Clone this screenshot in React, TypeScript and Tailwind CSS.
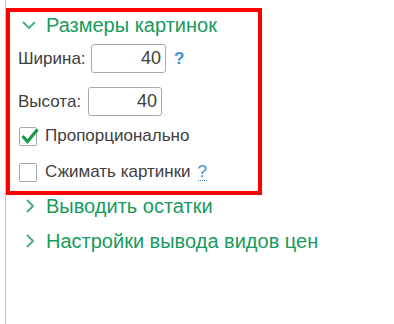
import React from "react";

/* ---------- иконки ---------- */
const ChevronDown = () => (
  <svg width="14" height="8" viewBox="0 0 14 8" className="shrink-0">
    <path d="M1 1 L7 7 L13 1" fill="none" stroke="#4caf80" strokeWidth="2" />
  </svg>
);

const ChevronRight = () => (
  <svg width="8" height="14" viewBox="0 0 8 14" className="shrink-0">
    <path d="M1 1 L7 7 L1 13" fill="none" stroke="#4caf80" strokeWidth="2" />
  </svg>
);

const Check = () => (
  <svg width="20" height="18" viewBox="0 0 20 18" className="absolute left-[0px] top-[-1px]">
    <path d="M2.5 9 L7.5 14.5 L17.5 2.5" fill="none" stroke="#179b4a" strokeWidth="3.2" />
  </svg>
);

/* ---------- элементы ---------- */
const NumField = ({ value, w }: { value: string; w: string }) => (
  <div
    className={`${w} h-[29px] border border-[#a8a8a8] rounded-[3px] flex items-center justify-end pr-[4px] text-[18px] text-[#404040]`}
  >
    {value}
  </div>
);

const CheckBox = ({ checked }: { checked?: boolean }) => (
  <div className="relative w-[18px] h-[19px] border border-[#a8a8a8] rounded-[2px] bg-white shrink-0">
    {checked && <Check />}
  </div>
);

const Group = ({ title }: { title: string }) => (
  <div className="flex items-center h-[24px] pl-[20px] gap-[12px] text-[20px] text-[#169b5c]">
    <ChevronRight />
    <span>{title}</span>
  </div>
);

export default function App() {
  return (
    <div
      className="w-[394px] h-[324px] bg-white pl-[5px] overflow-hidden"
      style={{ fontFamily: '"Liberation Sans", Arial, sans-serif' }}
    >
      <div className="h-full border-l border-[#c4c4c4] pt-[8px]">
        {/* выделенный блок */}
        <div className="w-[256px] h-[187px] border-[4px] border-[#ff0000] pt-[1px]">
          <div className="flex items-center h-[24px] pl-[12px] gap-[10px] text-[20px] text-[#169b5c]">
            <ChevronDown />
            <span>Размеры картинок</span>
          </div>

          <div className="flex items-center mt-[7px] pl-[8px] text-[17px] text-[#404040]">
            <span className="w-[73px]">Ширина:</span>
            <NumField value="40" w="w-[75px]" />
            <span className="ml-[8px] text-[17px] font-bold text-[#3a8ed8]">?</span>
          </div>

          <div className="flex items-center mt-[14px] pl-[8px] text-[17px] text-[#404040]">
            <span className="w-[70px]">Высота:</span>
            <NumField value="40" w="w-[74px]" />
          </div>

          <div className="flex items-center h-[20px] mt-[10px] pl-[9px] gap-[8px] text-[17px] text-[#404040] leading-[20px]">
            <CheckBox checked />
            <span>Пропорционально</span>
          </div>

          <div className="flex items-center h-[20px] mt-[16px] pl-[9px] gap-[8px] text-[17px] text-[#404040] leading-[20px]">
            <CheckBox />
            <span>Сжимать картинки</span>
            <span className="-ml-[1px] text-[17px] text-[#3a8ed8] border-b border-dotted border-[#3a8ed8] leading-[16px]">
              ?
            </span>
          </div>
        </div>

        <div className="mt-[-1px]">
          <Group title="Выводить остатки" />
        </div>
        <div className="mt-[11px]">
          <Group title="Настройки вывода видов цен" />
        </div>
      </div>
    </div>
  );
}
